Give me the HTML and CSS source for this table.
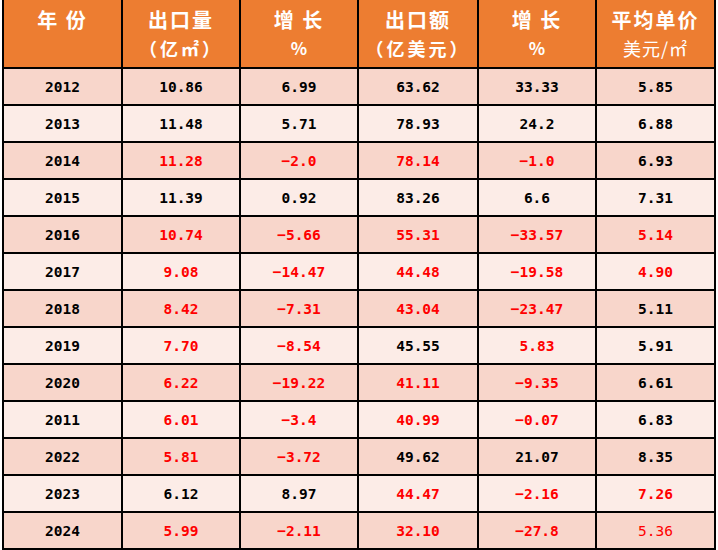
FILE: index.html
```html
<!DOCTYPE html>
<html lang="zh-CN">
<head>
<meta charset="utf-8">
<title>出口统计</title>
<link rel="stylesheet" href="styles.css">
</head>
<body>
<div class="sheet">
  <div class="row head">
    <div class="cell"><span class="l1">年&nbsp;份</span></div>
    <div class="cell"><span class="l1">出口量</span><span class="l2">（亿㎡）</span></div>
    <div class="cell"><span class="l1">增&nbsp;长</span><span class="l2 pct">%</span></div>
    <div class="cell"><span class="l1">出口额</span><span class="l2">（亿美元）</span></div>
    <div class="cell"><span class="l1">增&nbsp;长</span><span class="l2 pct">%</span></div>
    <div class="cell"><span class="l1">平均单价</span><span class="l2 thin">美元/㎡</span></div>
  </div>
  <div class="row a"><div class="cell">2012</div><div class="cell">10.86</div><div class="cell">6.99</div><div class="cell">63.62</div><div class="cell">33.33</div><div class="cell">5.85</div></div>
  <div class="row b"><div class="cell">2013</div><div class="cell">11.48</div><div class="cell">5.71</div><div class="cell">78.93</div><div class="cell">24.2</div><div class="cell">6.88</div></div>
  <div class="row a"><div class="cell">2014</div><div class="cell red">11.28</div><div class="cell red">−2.0</div><div class="cell red">78.14</div><div class="cell red">−1.0</div><div class="cell">6.93</div></div>
  <div class="row b"><div class="cell">2015</div><div class="cell">11.39</div><div class="cell">0.92</div><div class="cell">83.26</div><div class="cell">6.6</div><div class="cell">7.31</div></div>
  <div class="row a"><div class="cell">2016</div><div class="cell red">10.74</div><div class="cell red">−5.66</div><div class="cell red">55.31</div><div class="cell red">−33.57</div><div class="cell red">5.14</div></div>
  <div class="row b"><div class="cell">2017</div><div class="cell red">9.08</div><div class="cell red">−14.47</div><div class="cell red">44.48</div><div class="cell red">−19.58</div><div class="cell red">4.90</div></div>
  <div class="row a"><div class="cell">2018</div><div class="cell red">8.42</div><div class="cell red">−7.31</div><div class="cell red">43.04</div><div class="cell red">−23.47</div><div class="cell">5.11</div></div>
  <div class="row b"><div class="cell">2019</div><div class="cell red">7.70</div><div class="cell red">−8.54</div><div class="cell">45.55</div><div class="cell red">5.83</div><div class="cell">5.91</div></div>
  <div class="row a"><div class="cell">2020</div><div class="cell red">6.22</div><div class="cell red">−19.22</div><div class="cell red">41.11</div><div class="cell red">−9.35</div><div class="cell">6.61</div></div>
  <div class="row b"><div class="cell">2011</div><div class="cell red">6.01</div><div class="cell red">−3.4</div><div class="cell red">40.99</div><div class="cell red">−0.07</div><div class="cell">6.83</div></div>
  <div class="row a"><div class="cell">2022</div><div class="cell red">5.81</div><div class="cell red">−3.72</div><div class="cell">49.62</div><div class="cell">21.07</div><div class="cell">8.35</div></div>
  <div class="row b"><div class="cell">2023</div><div class="cell">6.12</div><div class="cell">8.97</div><div class="cell red">44.47</div><div class="cell red">−2.16</div><div class="cell red">7.26</div></div>
  <div class="row a"><div class="cell">2024</div><div class="cell red">5.99</div><div class="cell red">−2.11</div><div class="cell red">32.10</div><div class="cell red">−27.8</div><div class="cell red light">5.36</div></div>
</div>
</body>
</html>
```
FILE: styles.css
```css
html, body {
  margin: 0;
  padding: 0;
  background: #ffffff;
}
body {
  width: 718px;
  height: 550px;
  overflow: hidden;
}
.sheet {
  margin-left: 2px;
  width: 712px;
  border-left: 2px solid #000;
  display: flex;
  flex-direction: column;
}
.row {
  display: grid;
  grid-template-columns: 119px 118px 118px 120px 118px 119px;
  height: 37px;
  box-sizing: border-box;
  border-bottom: 2px solid #000;
}
.row .cell {
  box-sizing: border-box;
  border-right: 2px solid #000;
  display: flex;
  align-items: center;
  justify-content: center;
  font-family: "DejaVu Sans Mono", "Liberation Mono", monospace;
  font-weight: bold;
  font-size: 14.5px;
  color: #000;
}
.row.a { background: #f8d6cb; }
.row.b { background: #fcece7; }
.row.head {
  height: 69px;
  background: #ed7d31;
}
.row.head .cell {
  flex-direction: column;
  justify-content: flex-start;
  color: #fff;
  font-family: "Noto Sans CJK SC", "Noto Sans CJK JP", sans-serif;
  font-weight: bold;
  font-size: 20px;
  padding-top: 6px;
}
.l1 {
  line-height: 28px;
  letter-spacing: 2px;
}
.l2 {
  line-height: 28px;
  font-size: 18px;
  letter-spacing: 3px;
}
.l2.pct {
  font-size: 17px;
  letter-spacing: 0;
}
.l2.thin {
  font-weight: normal;
  font-size: 18px;
  letter-spacing: 1px;
}
.row .cell.red { color: #ff0000; }
.row .cell.light { font-weight: normal; }
```
